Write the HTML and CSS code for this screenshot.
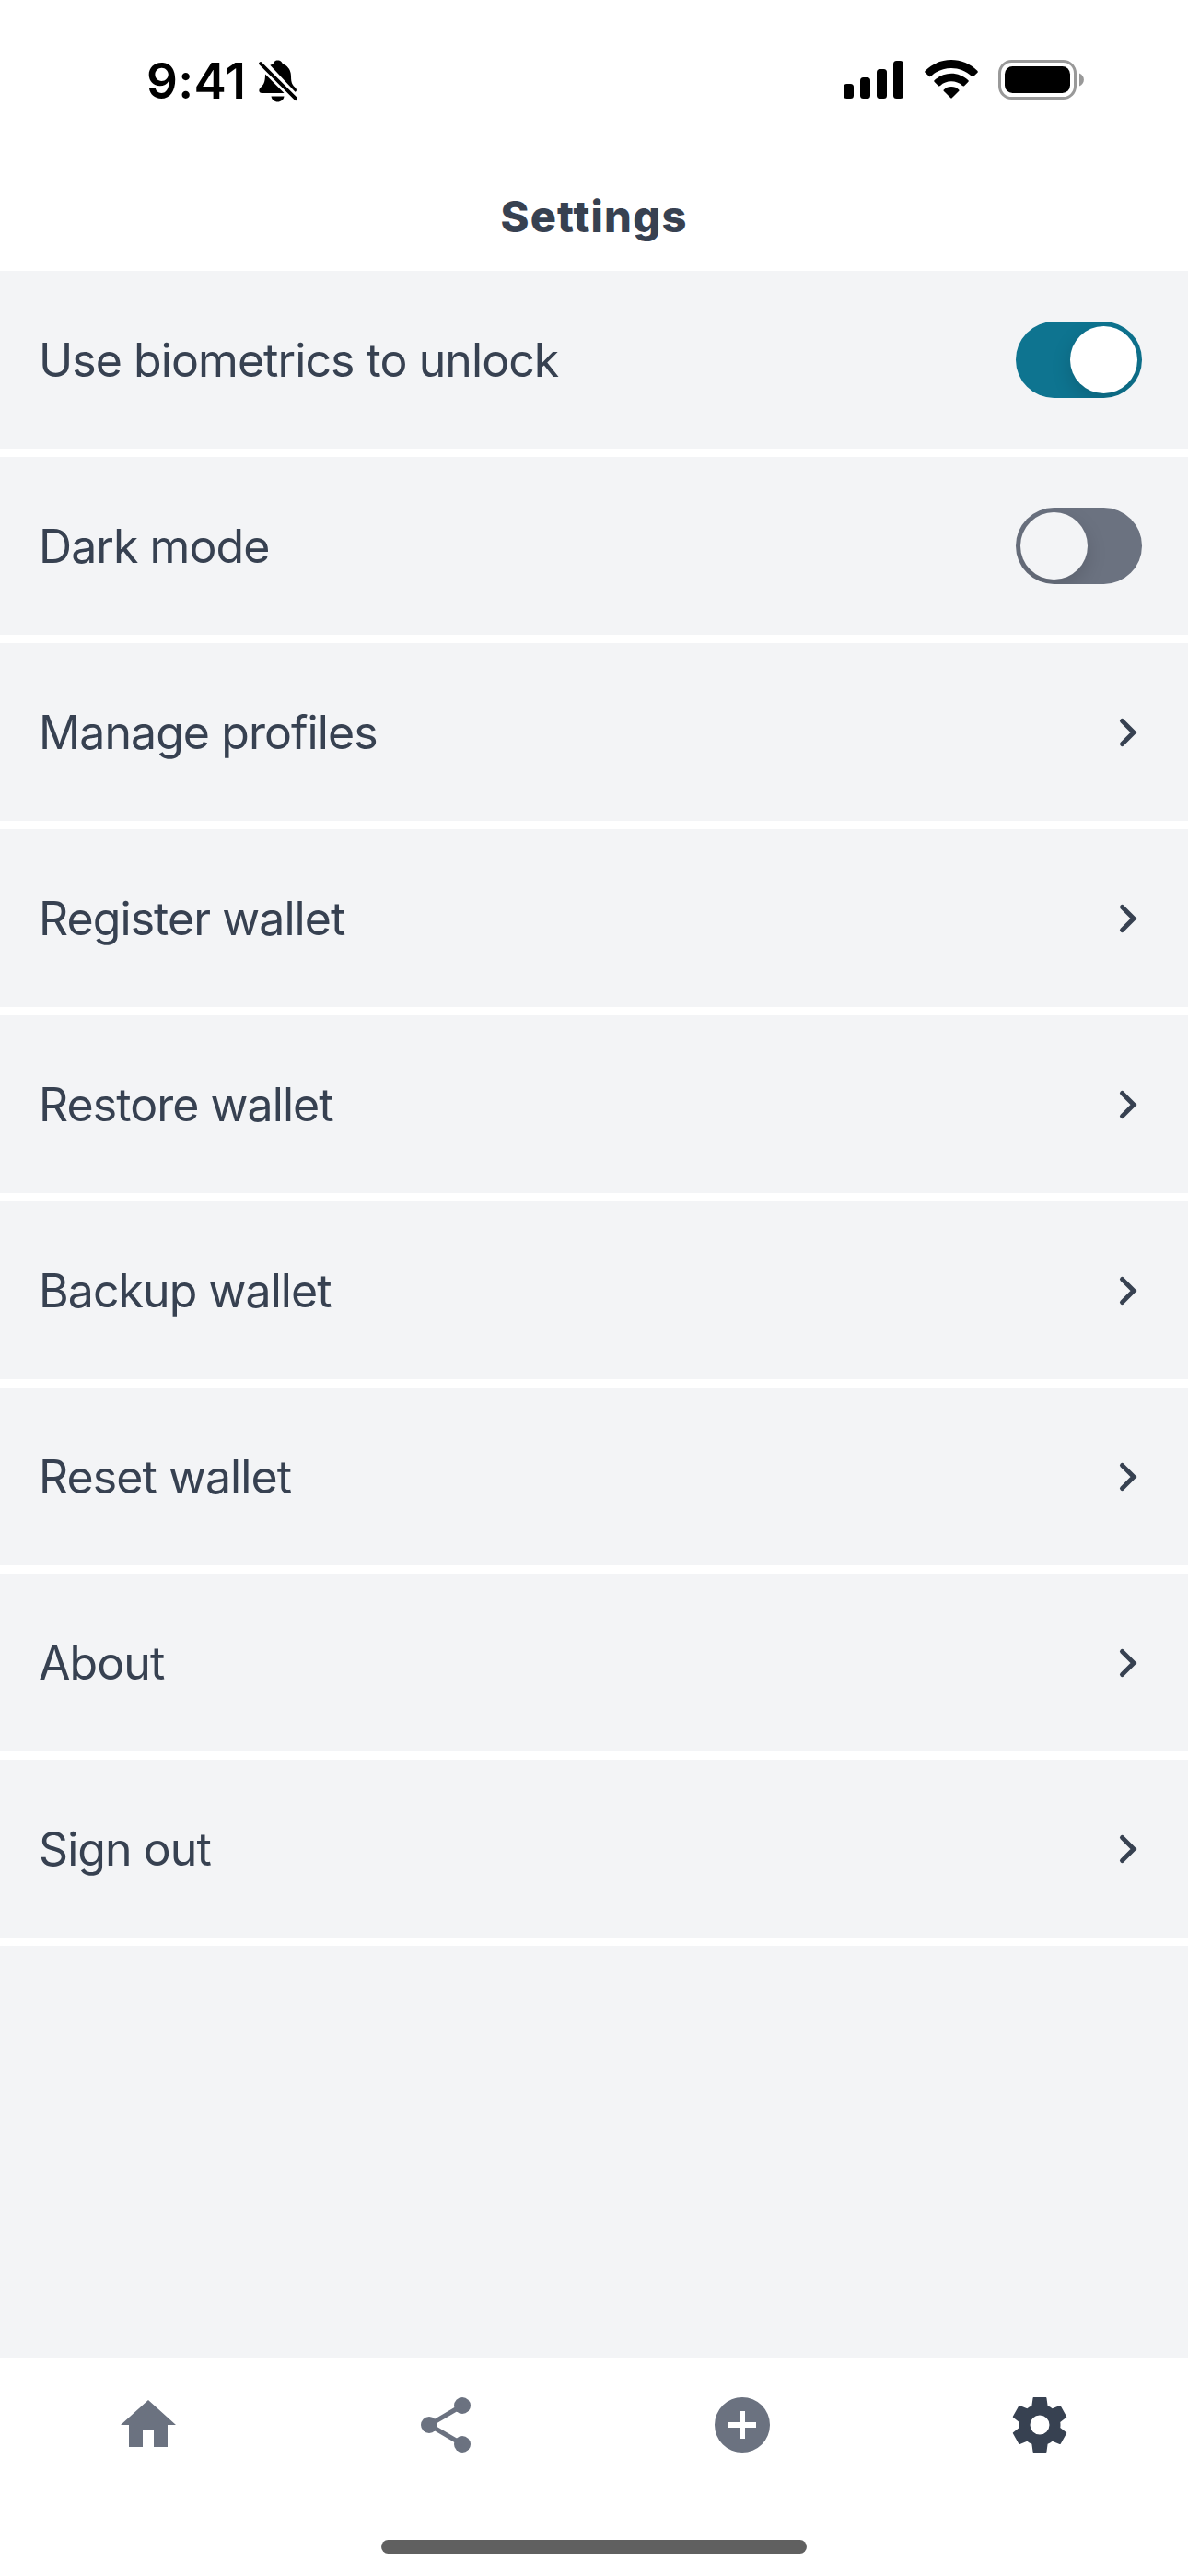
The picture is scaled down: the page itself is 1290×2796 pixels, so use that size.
FILE: index.html
```html
<!DOCTYPE html>
<html lang="en">
<head>
<meta charset="utf-8">
<title>Settings</title>
<link rel="stylesheet" href="styles.css">
</head>
<body>
<svg class="sprite" aria-hidden="true">
  <symbol id="chevron" viewBox="0 0 24 36">
    <path d="M5.5 5.5 18 18 5.5 30.5" fill="none" stroke="currentColor" stroke-width="5" stroke-linecap="round"/>
  </symbol>
</svg>
<div class="screen">
  <header class="status">
    <div class="status-left">
      <span class="clock">9:41</span>
      <svg class="bell" viewBox="0 0 42 46">
        <path d="M12.3 5.8C14 4.800 15.500 4.600 16 3.500 17 1 19 0.500 20.500 0.500S24.500 1 25.500 3.500C26 4.600 27.500 4.800 29 5.800 33.500 9 35 13.500 35 18 35 25.500 37 27.500 39.500 30 41.500 32 41.500 34 39.500 34.800Z"/>
        <path d="M7 15.500 27.500 36H3.500C0 36-0.500 32.500 1.500 30.500 5 27 7 25 7 15.500Z"/>
        <path d="M13.500 39.500H27.500C27 43 24 45.500 20.500 45.500S14 43 13.500 39.500Z"/>
        <path d="M2 4 40.200 42.200" stroke="#000" stroke-width="3.800" stroke-linecap="round"/>
      </svg>
    </div>
    <div class="status-right">
      <svg class="signal" viewBox="0 0 65 41">
        <rect y="25" width="11" height="16" rx="3.500"/>
        <rect x="18" y="18" width="11" height="23" rx="3.500"/>
        <rect x="36" y="9" width="11" height="32" rx="3.500"/>
        <rect x="54" width="11" height="41" rx="3.500"/>
      </svg>
      <svg class="wifi" viewBox="0 0 58 42">
        <path d="M0.500 12C16-4 42-4 57.500 12Q58 13 57.500 13.700L53 18Q52 18.500 51 17.700C39 6 19 6 7 17.700Q6 18.500 5 18L0.500 13.700Q0 13 0.500 12Z"/>
        <path d="M10.500 22.300C21 12.300 37 12.300 47.500 22.300Q48 23 47.500 23.700L43 28.200Q42 28.700 41 28C34.500 21.800 23.500 21.800 17 28Q16 28.700 15 28.200L10.500 23.700Q10 23 10.500 22.300Z"/>
        <path d="M20.700 32.400C25 27.900 33 27.900 37.300 32.400Q37.700 33 37.300 33.700L29.700 41.300Q29 42 28.300 41.300L20.700 33.700Q20.300 33 20.700 32.400Z"/>
      </svg>
      <svg class="battery" viewBox="0 0 94 43">
        <rect x="1.500" y="1.500" width="82" height="40" rx="13" fill="none" stroke="#999" stroke-width="3"/>
        <rect x="7" y="7" width="71" height="29" rx="8.500"/>
        <path d="M88 14.500C94.500 17 94.500 26 88 28.500Z" fill="#999"/>
      </svg>
    </div>
  </header>
  <div class="titlebar"><h1 class="title">Settings</h1></div>
  <main class="content">
    <div class="row"><span class="label">Use biometrics to unlock</span><span class="switch on"><span class="knob"></span></span></div>
    <div class="row"><span class="label">Dark mode</span><span class="switch"><span class="knob"></span></span></div>
    <div class="row"><span class="label">Manage profiles</span><svg class="chevron"><use href="#chevron"/></svg></div>
    <div class="row"><span class="label">Register wallet</span><svg class="chevron"><use href="#chevron"/></svg></div>
    <div class="row"><span class="label">Restore wallet</span><svg class="chevron"><use href="#chevron"/></svg></div>
    <div class="row"><span class="label">Backup wallet</span><svg class="chevron"><use href="#chevron"/></svg></div>
    <div class="row"><span class="label">Reset wallet</span><svg class="chevron"><use href="#chevron"/></svg></div>
    <div class="row"><span class="label">About</span><svg class="chevron"><use href="#chevron"/></svg></div>
    <div class="row"><span class="label">Sign out</span><svg class="chevron"><use href="#chevron"/></svg></div>
  </main>
  <nav class="tabs">
    <div class="tab"><svg class="icon" viewBox="0 0 24 24"><path d="M10 20V14H14V20H19V12H22L12 3 2 12H5V20Z"/></svg></div>
    <div class="tab"><svg class="icon" viewBox="0 0 24 24"><circle cx="18" cy="5" r="3"/><circle cx="6" cy="12" r="3"/><circle cx="18" cy="19" r="3"/><path d="M18 5 6 12 18 19" fill="none" stroke="currentColor" stroke-width="1.650"/></svg></div>
    <div class="tab"><svg class="icon" viewBox="0 0 24 24"><path d="M17 13H13V17H11V13H7V11H11V7H13V11H17M12 2A10 10 0 0 0 2 12 10 10 0 0 0 12 22 10 10 0 0 0 22 12 10 10 0 0 0 12 2Z"/></svg></div>
    <div class="tab active"><svg class="icon" viewBox="0 0 24 24"><path d="M12 15.500A3.500 3.500 0 0 1 8.500 12 3.500 3.500 0 0 1 12 8.500 3.500 3.500 0 0 1 15.500 12 3.500 3.500 0 0 1 12 15.500M19.430 12.970C19.470 12.650 19.500 12.330 19.500 12S19.470 11.340 19.430 11L21.640 9.290Q21.830 9.120 21.700 8.880L19.600 5.180Q19.450 4.950 19.200 4.990L16.560 6.050C16.040 5.660 15.500 5.320 14.870 5.070L14.480 2.250Q14.440 2.020 14.200 2H9.800Q9.560 2.020 9.520 2.250L9.130 5.070C8.500 5.320 7.960 5.660 7.440 6.050L4.800 4.990Q4.550 4.950 4.400 5.180L2.300 8.880Q2.170 9.120 2.360 9.290L4.570 11C4.530 11.340 4.500 11.670 4.500 12S4.530 12.650 4.570 12.970L2.360 14.710Q2.170 14.880 2.300 15.120L4.400 18.820Q4.550 19.050 4.800 19.010L7.440 17.940C7.960 18.340 8.500 18.680 9.130 18.930L9.520 21.750Q9.560 21.980 9.800 22H14.200Q14.440 21.980 14.480 21.750L14.870 18.930C15.500 18.670 16.040 18.340 16.560 17.940L19.200 19.010Q19.450 19.050 19.600 18.820L21.700 15.120Q21.830 14.880 21.640 14.710Z"/></svg></div>
  </nav>
  <div class="home-area"><div class="home-bar"></div></div>
</div>
</body>
</html>
```
FILE: styles.css
```css
* { box-sizing: border-box; }
body {
  margin: 0;
  background: #fff;
  color: #374151;
  font-family: Inter, "Liberation Sans", sans-serif;
}
.sprite { position: absolute; width: 0; height: 0; }
.screen {
  display: flex;
  flex-direction: column;
  width: 1290px;
  height: 2796px;
}
.status {
  display: flex;
  justify-content: space-between;
  height: 177px;
  padding: 65px 112px 0 159px;
  color: #000;
}
.status-left, .status-right { display: flex; align-items: flex-start; }
.clock {
  width: 122px;
  font-size: 53px;
  font-weight: 600;
  line-height: 46px;
  letter-spacing: 0.4px;
}
.bell { width: 42px; height: 46px; }
.signal { width: 65px; height: 41px; margin: 1px 23px 0 0; }
.wifi { width: 58px; height: 42px; margin-right: 22px; }
.battery { width: 94px; height: 43px; }
.titlebar {
  display: flex;
  align-items: center;
  justify-content: center;
  height: 117px;
  padding-bottom: 2px;
}
.title {
  margin: 0;
  font-size: 47px;
  font-weight: 800;
  line-height: 60px;
  letter-spacing: 1.2px;
}
.content {
  flex: 1;
  background: #f3f4f6;
}
.row {
  display: flex;
  align-items: center;
  justify-content: space-between;
  height: 202px;
  padding: 0 50px 0 42px;
  border-bottom: 9px solid #fff;
}
.label {
  font-size: 50px;
  line-height: 60px;
  letter-spacing: -0.93px;
}
.chevron { width: 24px; height: 36px; margin-right: 3px; }
.switch {
  display: flex;
  width: 137px;
  height: 83px;
  padding: 5px;
  border-radius: 42px;
  background: #6b7280;
  overflow: hidden;
}
.switch.on { justify-content: flex-end; background: #0e7490; }
.knob {
  width: 73px;
  height: 73px;
  border-radius: 50%;
  background: #f3f4f6;
  box-shadow: 0 8px 21px rgba(0, 0, 0, 0.15);
}
.on .knob { background: #fff; }
.tabs {
  display: flex;
  height: 147px;
  padding-top: 37px;
  color: #6b7280;
}
.tab { display: flex; flex: 1; justify-content: center; }
.tab.active { color: #374151; }
.icon { width: 72px; height: 72px; fill: currentColor; }
.home-area {
  display: flex;
  justify-content: center;
  height: 90px;
  padding-top: 51px;
}
.home-bar {
  width: 462px;
  height: 15px;
  border-radius: 8px;
  background: #606060;
}
```
